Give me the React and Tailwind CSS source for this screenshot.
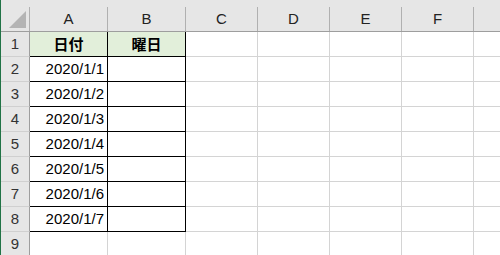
import React from "react";

const cols = [
  { k: "A", w: "w-[78px]" },
  { k: "B", w: "w-[78px]" },
  { k: "C", w: "w-[72px]" },
  { k: "D", w: "w-[72px]" },
  { k: "E", w: "w-[72px]" },
  { k: "F", w: "w-[72px]" },
  { k: "", w: "w-[72px]" },
];

const dates = ["2020/1/1", "2020/1/2", "2020/1/3", "2020/1/4", "2020/1/5", "2020/1/6", "2020/1/7"];

function RowHead({ n }) {
  return (
    <div className="flex h-[25px] w-[30px] shrink-0">
      <div className="w-px bg-[#217346]" />
      <div className="flex flex-1 items-center justify-center border-b border-r border-b-[#d0d0d0] border-r-[#9e9e9e] bg-[#e6e6e6] text-[15px] text-[#333]">
        {n}
      </div>
    </div>
  );
}

function Cell({ w, black, green, bold, right, center, children }) {
  const border = black
    ? "border-r border-b border-black"
    : "border-r border-b border-[#d4d4d4]";
  return (
    <div
      className={`flex h-[25px] shrink-0 items-center ${w} ${border} ${green ? "bg-[#e2efda]" : "bg-white"} ${right ? "justify-end pr-[3px]" : ""} ${center ? "justify-center" : ""} ${bold ? "font-bold" : ""} text-[15px] text-black`}
    >
      {children}
    </div>
  );
}

export default function App() {
  const rows = [];
  for (let r = 1; r <= 9; r++) {
    const inTable = r <= 8;
    rows.push(
      <div key={r} className="flex">
        <RowHead n={r} />
        {cols.map((c, i) => {
          const key = c.k || "G";
          if (i === 0 && r === 1)
            return (
              <Cell key={key} w={c.w} black green bold center>
                <span style={{ fontFamily: "'Noto Sans CJK JP', sans-serif" }}>日付</span>
              </Cell>
            );
          if (i === 1 && r === 1)
            return (
              <Cell key={key} w={c.w} black green bold center>
                <span style={{ fontFamily: "'Noto Sans CJK JP', sans-serif" }}>曜日</span>
              </Cell>
            );
          if (i === 0 && inTable)
            return (
              <Cell key={key} w={c.w} black right>
                {dates[r - 2]}
              </Cell>
            );
          if (i === 1 && inTable) return <Cell key={key} w={c.w} black />;
          return <Cell key={key} w={c.w} />;
        })}
      </div>
    );
  }

  return (
    <div className="h-[255px] w-[500px] overflow-hidden bg-white font-['Liberation_Sans',Arial,sans-serif]">
      <div className="flex h-[32px]">
        <div className="flex w-[30px] shrink-0">
          <div className="w-px bg-[#217346]" />
          <div className="flex flex-1 border-b border-[#9e9e9e] bg-[#e6e6e6]">
            <div className="flex flex-1 items-end justify-end pb-[3px] pr-[2px]">
              <svg width="18" height="17" viewBox="0 0 18 17">
                <polygon points="17,0 17,17 0,17" fill="#b4b4b4" />
              </svg>
            </div>
            <div className="mt-[7px] w-px bg-[#b0b0b0]" />
          </div>
        </div>
        {cols.map((c, i) => (
          <div key={c.k || "G"} className={`flex shrink-0 ${c.w} border-b border-[#9e9e9e] bg-[#e6e6e6]`}>
            <div className="flex flex-1 items-center justify-center pt-[7px] text-[15px] text-[#222]">{c.k}</div>
            <div className="mt-[7px] w-px bg-[#b0b0b0]" />
          </div>
        ))}
      </div>
      {rows}
    </div>
  );
}
